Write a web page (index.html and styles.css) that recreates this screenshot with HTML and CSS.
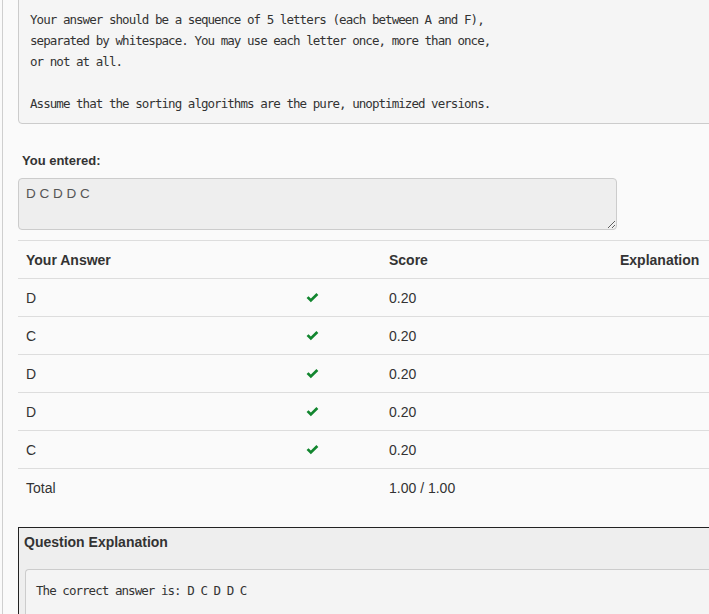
FILE: index.html
```html
<!DOCTYPE html>
<html>
<head>
<meta charset="utf-8">
<link rel="stylesheet" href="styles.css">
</head>
<body>
<div class="page">
  <pre class="question">Your answer should be a sequence of 5 letters (each between A and F),
separated by whitespace. You may use each letter once, more than once,
or not at all.

Assume that the sorting algorithms are the pure, unoptimized versions.</pre>

  <div class="label">You entered:</div>
  <textarea class="entered" readonly>D C D D C</textarea>

  <table class="results">
    <thead>
      <tr><th class="c-ans">Your Answer</th><th class="c-ok"></th><th class="c-score">Score</th><th class="c-exp">Explanation</th></tr>
    </thead>
    <tbody>
      <tr><td>D</td><td><svg class="check" width="13" height="10" viewBox="0 0 14 11"><path d="M0.5 5.6 L2.6 3.5 L5.2 6.1 L11.3 0 L13.4 2.1 L5.2 10.3 Z" fill="#12862f"/></svg></td><td>0.20</td><td></td></tr>
      <tr><td>C</td><td><svg class="check" width="13" height="10" viewBox="0 0 14 11"><path d="M0.5 5.6 L2.6 3.5 L5.2 6.1 L11.3 0 L13.4 2.1 L5.2 10.3 Z" fill="#12862f"/></svg></td><td>0.20</td><td></td></tr>
      <tr><td>D</td><td><svg class="check" width="13" height="10" viewBox="0 0 14 11"><path d="M0.5 5.6 L2.6 3.5 L5.2 6.1 L11.3 0 L13.4 2.1 L5.2 10.3 Z" fill="#12862f"/></svg></td><td>0.20</td><td></td></tr>
      <tr><td>D</td><td><svg class="check" width="13" height="10" viewBox="0 0 14 11"><path d="M0.5 5.6 L2.6 3.5 L5.2 6.1 L11.3 0 L13.4 2.1 L5.2 10.3 Z" fill="#12862f"/></svg></td><td>0.20</td><td></td></tr>
      <tr><td>C</td><td><svg class="check" width="13" height="10" viewBox="0 0 14 11"><path d="M0.5 5.6 L2.6 3.5 L5.2 6.1 L11.3 0 L13.4 2.1 L5.2 10.3 Z" fill="#12862f"/></svg></td><td>0.20</td><td></td></tr>
      <tr class="total"><td>Total</td><td></td><td>1.00 / 1.00</td><td></td></tr>
    </tbody>
  </table>

  <div class="explain">
    <div class="explain-head">Question Explanation</div>
    <pre class="explain-body">The correct answer is: D C D D C

</pre>
  </div>
</div>
</body>
</html>
```

FILE: styles.css
```css
html, body {
  margin: 0;
  padding: 0;
  background: #fafafa;
  overflow: hidden;
}
body {
  font-family: "Liberation Sans", Arial, sans-serif;
  color: #333;
}
.page {
  margin-left: 2px;
  border-left: 1px solid #cfcfcf;
  padding-left: 15px;
  width: 740px;
  min-height: 614px;
  background: #fafafa;
}
.question {
  margin: -1px 0 0 0;
  padding: 9px 11px;
  font-family: "DejaVu Sans Mono", "Liberation Mono", monospace;
  font-size: 12.5px;
  letter-spacing: -0.95px;
  line-height: 21px;
  color: #333;
  background: #f5f5f5;
  border: 1px solid #cccccc;
  border-radius: 0 0 4px 4px;
  white-space: pre;
}
.label {
  margin: 29px 0 0 4px;
  font-weight: bold;
  font-size: 13px;
  line-height: 16px;
  color: #333;
}
.entered {
  display: block;
  box-sizing: border-box;
  margin: 9px 0 0 0;
  width: 599px;
  height: 52px;
  padding: 7px 7px;
  font-family: "Liberation Sans", Arial, sans-serif;
  font-size: 13.5px;
  line-height: 16px;
  color: #555;
  background: #eeeeee;
  border: 1px solid #cccccc;
  border-radius: 4px;
  outline: none;
}
.results {
  margin-top: 10px;
  border-collapse: collapse;
  width: 730px;
  font-size: 14px;
  color: #333;
}
.results th, .results td {
  height: 37px;
  padding: 0 8px;
  text-align: left;
  vertical-align: middle;
  border-top: 1px solid #dddddd;
  line-height: 20px;
}
.results th {
  font-weight: bold;
  padding-top: 1px;
  height: 36px;
}
.c-ans { width: 264px; }
.c-ok { width: 67px; }
.c-score { width: 215px; }
.check {
  display: block;
  margin-top: 1px;
}
.explain {
  margin-top: 21px;
  border-top: 1px solid #222;
  border-left: 1px solid #222;
  background: #eeeeee;
  padding-left: 6px;
}
.explain-head {
  box-sizing: border-box;
  height: 41px;
  padding: 5px 0 0 0;
  margin-left: -1px;
  font-weight: bold;
  font-size: 14px;
  line-height: 18px;
  color: #333;
}
.explain-body {
  margin: 0;
  padding: 10px 10px;
  font-family: "DejaVu Sans Mono", "Liberation Mono", monospace;
  font-size: 12.5px;
  letter-spacing: -0.95px;
  line-height: 21px;
  color: #333;
  background: #f4f4f4;
  border: 1px solid #cccccc;
  border-right: none;
  border-radius: 4px 0 0 0;
}
```
